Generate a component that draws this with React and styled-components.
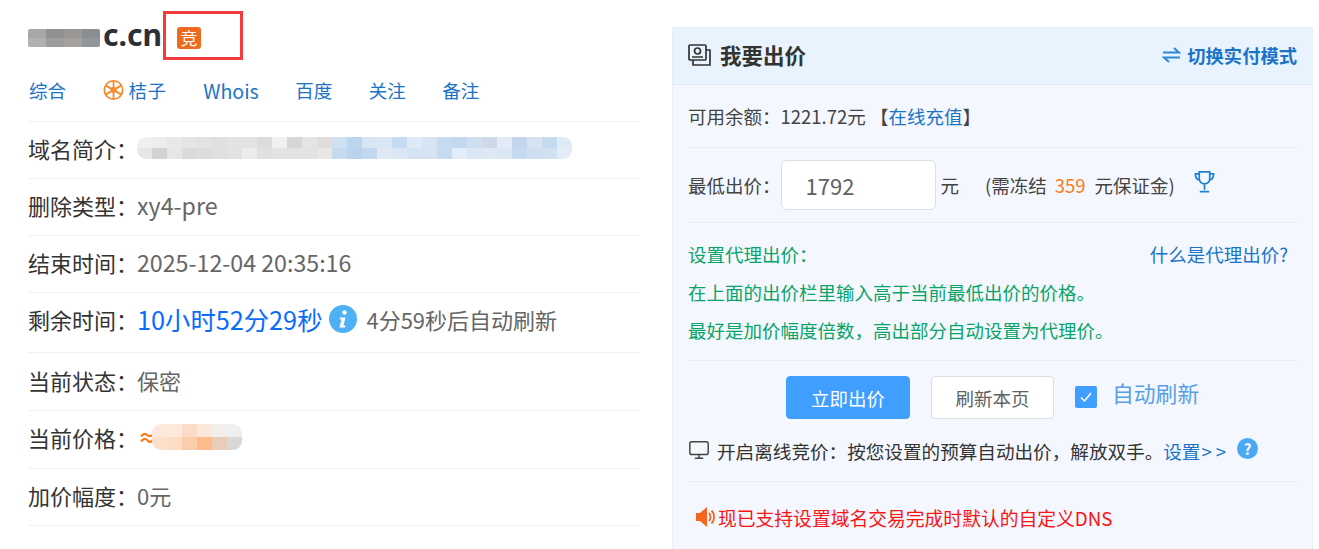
import React from "react";
import styled, { createGlobalStyle } from "styled-components";
import { Monitor } from "lucide-react";

const Global = createGlobalStyle`
  html, body { margin: 0; padding: 0; background: #fff; overflow: hidden; }
  body { font-family: "Noto Sans CJK SC", "Noto Sans", sans-serif; }
  #root { height: 549px; overflow: hidden; }
`;

const Page = styled.div`
  display: flex;
  align-items: flex-start;
  gap: 32px;
  padding: 0 6px 0 28px;
  height: 549px;
  box-sizing: border-box;
`;

const Left = styled.div`
  width: 612px;
  flex: none;
`;

const TitleRow = styled.div`
  position: relative;
  display: flex;
  align-items: center;
  height: 60px;
  padding-top: 9px;
  box-sizing: border-box;
`;

const Domain = styled.div`
  display: flex;
  align-items: center;
  font-family: "Noto Sans", sans-serif;
  font-size: 30px;
  font-weight: 700;
  color: #2b2f36;
  line-height: 40px;
`;

const Badge = styled.span`
  display: inline-flex;
  align-items: center;
  justify-content: center;
  width: 24px;
  height: 22px;
  margin-left: 15px;
  margin-top: 6px;
  border-radius: 3px;
  background: #ee6a1f;
  color: #fff;
  font-size: 17px;
  line-height: 22px;
`;

const RedBox = styled.div`
  position: absolute;
  left: 135px;
  top: 11px;
  width: 80px;
  height: 49px;
  border: 3px solid #f33b3b;
  box-sizing: border-box;
`;

const Nav = styled.nav`
  display: flex;
  align-items: center;
  gap: 36.5px;
  height: 62px;
  padding-left: 1px;
  padding-bottom: 1px;
  border-bottom: 1px solid #f0f0f0;
  box-sizing: border-box;
  font-size: 18.5px;
  color: #1a73c9;
`;

const NavItem = styled.a`
  display: inline-flex;
  align-items: center;
  gap: 5px;
  font-size: ${(p) => (p.$latin ? "19.6px" : "inherit")};
`;

const OrangeItem = styled(NavItem)`
  gap: 5px;
  letter-spacing: 0.6px;
`;

const Row = styled.div`
  display: flex;
  align-items: center;
  height: ${(p) => p.$h || 57}px;
  padding-bottom: ${(p) => p.$pb || 4}px;
  border-bottom: 1px solid #f0f0f0;
  box-sizing: border-box;
  font-size: 22px;
  color: #666;
`;

const Label = styled.span`
  width: 109px;
  flex: none;
  color: #333;
  white-space: nowrap;
`;

const LatinValue = styled.span`
  font-size: 23.2px;
`;

const Countdown = styled.span`
  color: #0a6cff;
  font-size: 25.3px;
`;

const Refresh = styled.span`
  margin-left: 9px;
  color: #666;
`;

const Approx = styled.span`
  color: #ff7a10;
  font-weight: 700;
  font-size: 19px;
  margin-right: -5px;
  margin-left: 1px;
`;

const Mosaic = styled.div`
  display: grid;
  grid-template-columns: repeat(${(p) => p.$cols}, ${(p) => p.$size}px);
  grid-auto-rows: ${(p) => p.$rowH}px;
  border-radius: 9px;
  overflow: hidden;
  flex: none;
`;

const Cell = styled.i`
  display: block;
  background: ${(p) => p.$c};
`;

const DomainMosaic = styled(Mosaic)`
  border-radius: 2px;
  margin-right: 3px;
  margin-top: 6px;
`;

const Panel = styled.section`
  width: 641px;
  flex: none;
  margin-top: 27px;
  height: 522px;
  background: #f4f8fe;
  border: 1px solid #e6eef8;
  border-bottom: 0;
  box-sizing: border-box;
`;

const PanelHead = styled.header`
  display: flex;
  align-items: center;
  justify-content: space-between;
  height: 57px;
  padding: 0 15px 3px 15px;
  background: #e8f3fe;
  border-bottom: 1px solid #dbe9f9;
  box-sizing: border-box;
`;

const PanelTitle = styled.div`
  display: flex;
  align-items: center;
  gap: 9px;
  font-size: 21.5px;
  font-weight: 700;
  color: #333;
`;

const SwitchLink = styled.a`
  display: flex;
  align-items: center;
  gap: 6px;
  font-size: 18.3px;
  font-weight: 700;
  color: #1a73c9;
`;

const Section = styled.div`
  height: ${(p) => p.$h}px;
  padding-top: ${(p) => p.$top || 0}px;
  margin: 0 15px;
  border-bottom: ${(p) => (p.$last ? "0" : "1px solid #e9eef5")};
  box-sizing: border-box;
  font-size: 18.5px;
  color: #444;
`;

const Line = styled.div`
  display: flex;
  align-items: center;
  height: ${(p) => p.$h || 38}px;
  justify-content: ${(p) => (p.$between ? "space-between" : "flex-start")};
  color: ${(p) => p.$color || "inherit"};
`;

const BlueLink = styled.a`
  color: #1a73c9;
`;

const HelpLink = styled(BlueLink)`
  margin-right: 9px;
`;

const PriceInput = styled.div`
  display: flex;
  align-items: center;
  width: 155px;
  height: 50px;
  padding-left: 24px;
  background: #fff;
  border: 1px solid #dcdfe6;
  border-radius: 6px;
  box-sizing: border-box;
  font-size: 22px;
  color: #606266;
`;

const Unit = styled.span`
  margin: 0 26px 0 5px;
`;

const Orange = styled.span`
  color: #ff7a1a;
  margin: 0 9px 0 8px;
`;

const Actions = styled.div`
  display: flex;
  align-items: center;
  height: 43px;
  padding-left: 98px;
`;

const Button = styled.button`
  width: ${(p) => p.$w}px;
  height: 43px;
  padding: 0;
  font-family: inherit;
  font-size: 18.5px;
  border-radius: 4px;
  border: 1px solid ${(p) => (p.$primary ? "#409eff" : "#dcdfe6")};
  background: ${(p) => (p.$primary ? "#409eff" : "#fff")};
  color: ${(p) => (p.$primary ? "#fff" : "#606266")};
  margin-right: 21px;
`;

const Check = styled.span`
  display: inline-flex;
  align-items: center;
  justify-content: center;
  width: 22px;
  height: 22px;
  margin-right: 15px;
  background: #409eff;
  border-radius: 2px;
  position: relative;
  top: -1px;
`;

const AutoLabel = styled.span`
  font-size: 21.8px;
  color: #5a9fe6;
  position: relative;
  top: -5px;
`;

const Offline = styled.div`
  display: flex;
  align-items: center;
  height: 34px;
  margin-top: 14px;
  font-size: 18.6px;
  color: #333;
`;

const MonitorIcon = styled(Monitor)`
  margin-right: 7px;
  color: #444;
`;

const Arrows = styled.span`
  letter-spacing: 4px;
  margin-left: 1px;
`;

const Help = styled.span`
  display: inline-flex;
  align-items: center;
  justify-content: center;
  width: 21px;
  height: 21px;
  margin-left: 7px;
  position: relative;
  top: -2px;
  border-radius: 50%;
  background: #4aa8f5;
  color: #fff;
  font-size: 15px;
  font-weight: 700;
`;

const Notice = styled.div`
  display: flex;
  align-items: center;
  gap: 2px;
  height: 72px;
  padding: 0 0 2px 7px;
  box-sizing: border-box;
  font-size: 18.8px;
  color: #fa1414;
`;

const TrophyWrap = styled.span`
  display: inline-flex;
  margin-left: 19px;
  margin-top: -6px;
`;

const leftIntro = ["#efefef", "#ededed", "#e8e8e8", "#e4e4e4", "#e2e2e2", "#e0e0e0", "#e3e3e3", "#e2e2e2", "#dcdcdc", "#f1f1f0", "#d6d6d6", "#e4e4e4", "#dfdcdb"];
const rightIntro = ["#cfe0f2", "#bdd6ef", "#d8e5f3", "#d9e6f4", "#c6daf0", "#e0eaf6", "#d7e4f3", "#c6daf0", "#c2d8ef", "#cfdff0", "#cfd8e9", "#e3ecf6", "#c5d6ec", "#d7e3f2", "#c4daef", "#e0eaf5"];
const leftIntro2 = ["#e6e6e6", "#d3d3d3", "#e6e6e6", "#dadada", "#dcdcdc", "#e0e0e0", "#e2e2e2", "#ececec", "#e0e0e0", "#e3e3e3", "#e2e2e2", "#e2e2e2", "#e8e6e6"];
const rightIntro2 = ["#c6daf0", "#bcd3ee", "#c2d8f0", "#e0eaf5", "#dbe7f4", "#d5e3f3", "#d5e3f3", "#c6daf0", "#e3ecf7", "#dbe7f5", "#dde8f4", "#dce7f4", "#c5daf0", "#cfdff1", "#d0e0f0", "#e2ebf6"];
const introCells = [...leftIntro, ...rightIntro, ...leftIntro2, ...rightIntro2];

const priceCells = ["#fde9dd", "#fde8da", "#fbdcc9", "#fde6da", "#f3eeea", "#efefef", "#fedfcb", "#fddcc6", "#fccdaa", "#febb8b", "#e9cdb8", "#d8d8d8"];

const domainCells = ["#a8a8a8", "#8e9092", "#9a9896", "#8b8e92", "#b2b1b0", "#9a9c9e", "#a5a29e", "#92959a"];

function Wheel() {
  return (
    <svg width="21" height="24" viewBox="0 0 24 24" fill="none" stroke="#f58a2e" strokeWidth="2">
      <circle cx="12" cy="12" r="10.5" />
      <circle cx="12" cy="12" r="2.4" />
      <path d="M12 2v20M3.3 7l17.4 10M20.7 7L3.3 17" />
    </svg>
  );
}

function InfoDot() {
  return (
    <svg width="28" height="28" viewBox="0 0 28 28" style={{ marginLeft: 7 }}>
      <circle cx="14" cy="14" r="14" fill="#4fb1f5" />
      <circle cx="15.5" cy="7.5" r="2.2" fill="#fff" />
      <path d="M11 12.5h5.5l-2 8h2l-.5 2H10.500l2-8.300h-2z" fill="#fff" />
    </svg>
  );
}

function BidIcon() {
  return (
    <svg width="23" height="22" viewBox="0 0 23 22" fill="none" stroke="#333" strokeWidth="1.700">
      <rect x="1" y="1" width="17" height="15" rx="1" />
      <circle cx="9.500" cy="7" r="3" />
      <path d="M4 13h11M18 6h4v15H5v-5" />
    </svg>
  );
}

function SwapIcon() {
  return (
    <svg width="19" height="16" viewBox="0 0 19 16" fill="none" stroke="#2d86d9" strokeWidth="2">
      <path d="M1 5.500h16L12 1M18 10.500H2L7 15" />
    </svg>
  );
}

function Trophy() {
  return (
    <svg width="21" height="24" viewBox="0 0 22 24" fill="none" stroke="#1a80d8" strokeWidth="1.800">
      <path d="M5.500 1.500h11v7a5.500 5.500 0 0 1-11 0zM5.500 3.500H1.500c0 4 1.500 6 4.500 6.500M16.500 3.500h4c0 4-1.500 6-4.500 6.500M11 14v6M6 22h10" />
    </svg>
  );
}

function Speaker() {
  return (
    <svg width="21" height="24" viewBox="0 0 21 24">
      <path d="M1 8h4l7-6v20l-7-6H1z" fill="#f5651e" />
      <path d="M14 8c2 2 2 6 0 8M16.500 5.500c3.500 3.500 3.500 9.500 0 13" fill="none" stroke="#f5651e" strokeWidth="1.800" />
    </svg>
  );
}

export default function App() {
  return (
    <>
      <Global />
      <Page>
        <Left>
          <TitleRow>
            <Domain>
              <DomainMosaic $cols={4} $size={18} $rowH={9}>
                {domainCells.map((c, i) => (
                  <Cell key={i} $c={c} />
                ))}
              </DomainMosaic>
              <span>c.cn</span>
            </Domain>
            <Badge>竞</Badge>
            <RedBox />
          </TitleRow>
          <Nav>
            <NavItem>综合</NavItem>
            <OrangeItem>
              <Wheel />
              桔子
            </OrangeItem>
            <NavItem $latin>Whois</NavItem>
            <NavItem>百度</NavItem>
            <NavItem>关注</NavItem>
            <NavItem>备注</NavItem>
          </Nav>
          <Row>
            <Label>{"域名简介\uFF1A"}</Label>
            <Mosaic $cols={29} $size={15} $rowH={11}>
              {introCells.map((c, i) => (
                <Cell key={i} $c={c} />
              ))}
            </Mosaic>
          </Row>
          <Row>
            <Label>{"删除类型\uFF1A"}</Label>
            <LatinValue>xy4-pre</LatinValue>
          </Row>
          <Row>
            <Label>{"结束时间\uFF1A"}</Label>
            <LatinValue>2025-12-04 20:35:16</LatinValue>
          </Row>
          <Row $h={60} $pb={7}>
            <Label>{"剩余时间\uFF1A"}</Label>
            <Countdown>10小时52分29秒</Countdown>
            <InfoDot />
            <Refresh>4分59秒后自动刷新</Refresh>
          </Row>
          <Row $h={58}>
            <Label>{"当前状态\uFF1A"}</Label>
            保密
          </Row>
          <Row $h={58} $pb={6}>
            <Label>{"当前价格\uFF1A"}</Label>
            <Approx>≈</Approx>
            <Mosaic $cols={6} $size={15} $rowH={13}>
              {priceCells.map((c, i) => (
                <Cell key={i} $c={c} />
              ))}
            </Mosaic>
          </Row>
          <Row>
            <Label>{"加价幅度\uFF1A"}</Label>
            0元
          </Row>
        </Left>
        <Panel>
          <PanelHead>
            <PanelTitle>
              <BidIcon />
              我要出价
            </PanelTitle>
            <SwitchLink>
              <SwapIcon />
              切换实付模式
            </SwitchLink>
          </PanelHead>
          <Section $h={63}>
            <Line $h={62}>
              {"可用余额\uFF1A1221.72元 【"}
              <BlueLink>在线充值</BlueLink>】
            </Line>
          </Section>
          <Section $h={75}>
            <Line $h={74}>
              {"最低出价\uFF1A"}
              <PriceInput>1792</PriceInput>
              <Unit>元</Unit>
              (需冻结<Orange>359</Orange>元保证金)
              <TrophyWrap>
                <Trophy />
              </TrophyWrap>
            </Line>
          </Section>
          <Section $h={138} $top={12}>
            <Line $between $color="#0aa36a">
              {"设置代理出价\uFF1A"}
              <HelpLink>什么是代理出价?</HelpLink>
            </Line>
            <Line $color="#0aa36a">在上面的出价栏里输入高于当前最低出价的价格。</Line>
            <Line $color="#0aa36a">{"最好是加价幅度倍数\uFF0C高出部分自动设置为代理价。"}</Line>
          </Section>
          <Section $h={121} $top={15}>
            <Actions>
              <Button $primary $w={124}>
                立即出价
              </Button>
              <Button $w={123}>刷新本页</Button>
              <Check>
                <svg width="14" height="14" viewBox="0 0 14 14" fill="none" stroke="#fff" strokeWidth="1.500">
                  <path d="M2 7.500l3.500 3.500L12 3" />
                </svg>
              </Check>
              <AutoLabel>自动刷新</AutoLabel>
            </Actions>
            <Offline>
              <MonitorIcon size={22} strokeWidth={1.6} />
              {"开启离线竞价\uFF1A按您设置的预算自动出价\uFF0C解放双手。"}
              <BlueLink>
                设置<Arrows>&gt;&gt;</Arrows>
              </BlueLink>
              <Help>?</Help>
            </Offline>
          </Section>
          <Section $h={72} $last>
            <Notice>
              <Speaker />
              现已支持设置域名交易完成时默认的自定义DNS
            </Notice>
          </Section>
        </Panel>
      </Page>
    </>
  );
}
